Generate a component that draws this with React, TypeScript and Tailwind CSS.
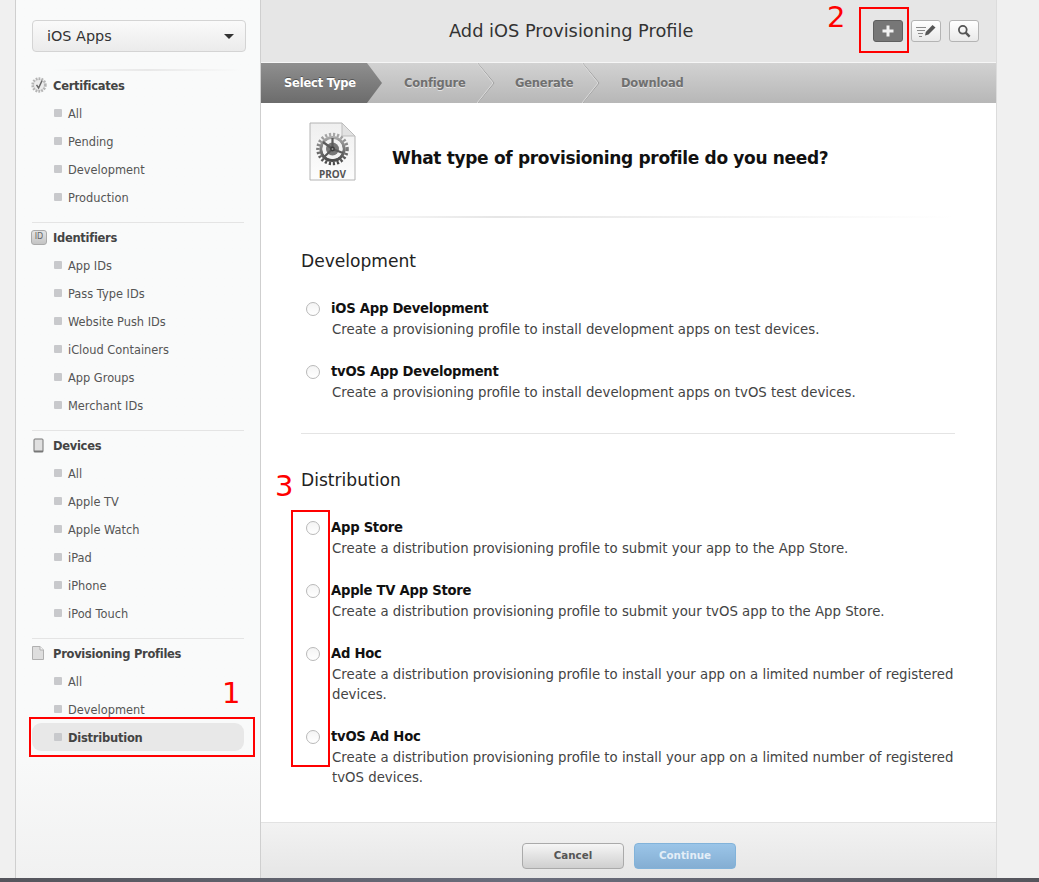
import React from 'react';

const SECTIONS = [
  { title: 'Certificates', icon: 'cert', items: ['All', 'Pending', 'Development', 'Production'] },
  { title: 'Identifiers', icon: 'id', items: ['App IDs', 'Pass Type IDs', 'Website Push IDs', 'iCloud Containers', 'App Groups', 'Merchant IDs'] },
  { title: 'Devices', icon: 'device', items: ['All', 'Apple TV', 'Apple Watch', 'iPad', 'iPhone', 'iPod Touch'] },
  { title: 'Provisioning Profiles', icon: 'doc', items: ['All', 'Development', 'Distribution'] },
];

const DEV_OPTIONS = [
  { title: 'iOS App Development', desc: 'Create a provisioning profile to install development apps on test devices.' },
  { title: 'tvOS App Development', desc: 'Create a provisioning profile to install development apps on tvOS test devices.' },
];

const DIST_OPTIONS = [
  { title: 'App Store', desc: 'Create a distribution provisioning profile to submit your app to the App Store.' },
  { title: 'Apple TV App Store', desc: 'Create a distribution provisioning profile to submit your tvOS app to the App Store.' },
  { title: 'Ad Hoc', desc: 'Create a distribution provisioning profile to install your app on a limited number of registered devices.' },
  { title: 'tvOS Ad Hoc', desc: 'Create a distribution provisioning profile to install your app on a limited number of registered tvOS devices.' },
];

function SectionIcon({ type }: { type: string }) {
  if (type === 'cert') {
    return (
      <svg width="16" height="16" viewBox="0 0 16 16" className="ml-[-1px]">
        <circle cx="8" cy="8" r="6.4" fill="#dcdcdc" stroke="#b4b4b4" strokeWidth="2.6" strokeDasharray="1.7 1.2" />
        <circle cx="8" cy="8" r="4.8" fill="#ececec" />
        <path d="M5.5 7.8 L7.6 11 L11 3.6" fill="none" stroke="#666" strokeWidth="1.4" />
      </svg>
    );
  }
  if (type === 'id') {
    return (
      <div className="w-[16px] h-[15px] ml-[-1px] rounded-[3px] border border-[#aaa] bg-gradient-to-b from-[#e4e4e4] to-[#c4c4c4] flex items-center justify-center text-[8px] leading-none text-[#666]">
        ID
      </div>
    );
  }
  if (type === 'device') {
    return (
      <svg width="11" height="15" viewBox="0 0 11 15" className="ml-[1px]">
        <rect x="0.5" y="0.5" width="10" height="14" rx="1.5" fill="#777" />
        <rect x="1.5" y="1.5" width="8" height="11" fill="#e0e0e0" />
      </svg>
    );
  }
  return (
    <svg width="12" height="14" viewBox="0 0 12 14">
      <path d="M0.5 0.5 H8 L11.5 4 V13.5 H0.5 Z" fill="#dedede" stroke="#b0b0b0" />
      <path d="M8 0.5 V4 H11.5" fill="#f6f6f6" stroke="#b0b0b0" />
    </svg>
  );
}

function Sidebar() {
  return (
    <aside className="w-[246px] shrink-0 border-x border-[#cfcfcf] bg-gradient-to-b from-[#f9fafa] from-85% to-[#f1f1f1] px-4 pt-5">
      <div className="h-8 w-[214px] rounded-[4px] border border-[#d4d4d4] bg-gradient-to-b from-[#fafafa] to-[#ebebeb] pl-[14px] pr-[11px] flex items-center justify-between">
        <span className="text-[14.4px] text-[#333] pt-[2px]">iOS Apps</span>
        <span className="w-0 h-0 border-x-[5px] border-x-transparent border-t-[5px] border-t-[#333]" />
      </div>
      <div className="mt-[17px] ml-5 h-[2px] w-[190px] bg-gradient-to-r from-transparent via-[#e8e8e8] to-transparent" />
      {SECTIONS.map((section, i) => (
        <section key={section.title} className={i === 0 ? '' : 'mt-[11px] border-t border-[#e4e4e4]'}>
          <div className="h-7 flex items-center">
            <div className="w-[21px] flex items-center">
              <SectionIcon type={section.icon} />
            </div>
            <span className="text-[11.5px] tracking-[-0.29px] font-bold text-[#444] pt-[3px]">{section.title}</span>
          </div>
          {section.items.map((item) => {
            const active = section.title === 'Provisioning Profiles' && item === 'Distribution';
            return (
              <div
                key={item}
                className={`h-7 w-[212px] pl-[22px] rounded-[9px] flex items-center gap-[6px] ${
                  active ? 'bg-[#e8e8e8] text-[11.5px] tracking-[-0.24px] font-bold text-[#444]' : 'text-[11.4px] text-[#555]'
                }`}
              >
                <span className="w-2 h-2 rounded-[1px] bg-[#c8c9cc]" />
                <span className="pt-[3px]">{item}</span>
              </div>
            );
          })}
        </section>
      ))}
    </aside>
  );
}

function Chevron() {
  return (
    <svg width="18" height="40" viewBox="0 0 18 40" className="absolute right-0 top-0">
      <path d="M0.5 0 L17 20 L0.5 40" fill="none" stroke="#9c9c9c" />
      <path d="M0 0 L16 20 L0 40" fill="none" stroke="#dcdcdc" />
    </svg>
  );
}

function StepBar() {
  return (
    <div className="h-[40px] flex bg-gradient-to-b from-[#d2d2d2] to-[#b7b7b7] text-[11.5px] tracking-[-0.2px] font-bold text-[#707070] [text-shadow:0_1px_0_#e4e4e4]">
      <div className="w-[121px] pl-[23px] pt-[2px] flex items-center bg-gradient-to-b from-[#8f8f8f] to-[#6c6c6c] text-white [text-shadow:0_-1px_0_#555] [clip-path:polygon(0_0,106px_0,121px_50%,106px_100%,0_100%)]">
        Select Type
      </div>
      <div className="relative w-[113px] pl-[22px] pt-[2px] flex items-center">
        Configure
        <Chevron />
      </div>
      <div className="relative w-[105px] pl-[20px] pt-[2px] flex items-center">
        Generate
        <Chevron />
      </div>
      <div className="pl-[21px] pt-[2px] flex items-center">Download</div>
    </div>
  );
}

function ProvIcon() {
  return (
    <svg width="48" height="60" viewBox="0 0 48 60" className="shrink-0">
      <defs>
        <linearGradient id="paper" x1="0" y1="0" x2="0" y2="1">
          <stop offset="0" stopColor="#efefef" />
          <stop offset="1" stopColor="#fdfdfd" />
        </linearGradient>
        <linearGradient id="gear" x1="0" y1="0" x2="0" y2="1">
          <stop offset="0" stopColor="#a8a8a8" />
          <stop offset="1" stopColor="#4a4a4a" />
        </linearGradient>
      </defs>
      <path d="M1 1 H33 L46 14 V58 H1 Z" fill="url(#paper)" stroke="#b4b4b4" />
      <path d="M33 1 V14 H46 Z" fill="#e2e2e2" stroke="#bdbdbd" />
      <circle cx="23.5" cy="27" r="14.6" fill="none" stroke="url(#gear)" strokeWidth="3.4" strokeDasharray="2.2 1.85" />
      <circle cx="23.5" cy="27" r="11.6" fill="none" stroke="url(#gear)" strokeWidth="3" />
      <circle cx="23.5" cy="27" r="10" fill="#f2f2f2" />
      <circle cx="23.5" cy="27" r="6.5" fill="#777" />
      <path d="M23.5 27 L23.5 16 M23.5 27 L34 31 M23.5 27 L14 36 M23.5 27 L14 20" stroke="#5a5a5a" strokeWidth="2.2" />
      <circle cx="23.5" cy="27" r="2.4" fill="#3c3c3c" />
      <circle cx="23.5" cy="27" r="0.9" fill="#9a9a9a" />
      <text x="23.5" y="55.5" textAnchor="middle" fontSize="10" fontWeight="700" fill="#555" fontFamily="'Noto Sans', sans-serif">
        PROV
      </text>
    </svg>
  );
}

function Option({ title, desc, className, radioClass }: { title: string; desc: string; className?: string; radioClass: string }) {
  return (
    <div className={`flex pl-[5px] ${className ?? ''}`}>
      <span className={`w-[14px] h-[14px] rounded-full border border-[#b9b9b9] bg-gradient-to-b from-[#f4f4f4] to-white shrink-0 ${radioClass}`} />
      <div className="ml-[11px] w-[630px]">
        <div className="text-[13.2px] tracking-[-0.26px] leading-[21px] font-bold text-[#111]">{title}</div>
        <div className="pl-px pt-px mb-[-1px] text-[13.3px] leading-[20px] text-[#444]">{desc}</div>
      </div>
    </div>
  );
}

function MiniButton({ children, dark }: { children: React.ReactNode; dark?: boolean }) {
  return (
    <button
      className={`w-[30px] h-[22px] rounded-[3px] border flex items-center justify-center ${
        dark ? 'bg-[#777] border-[#5f5f5f]' : 'bg-gradient-to-b from-white to-[#e9e9e9] border-[#b4b4b4]'
      }`}
    >
      {children}
    </button>
  );
}

function Main() {
  return (
    <main className="w-[735px] shrink-0 flex flex-col bg-white">
      <header className="relative h-[63px] bg-[#e6e6e6] border-b border-b-[#f6f6f6] pl-[188px] flex items-center">
        <h1 className="text-[17.8px] font-normal text-[#333]">Add iOS Provisioning Profile</h1>
        <div className="absolute left-[612px] top-5 flex gap-2">
          <MiniButton dark>
            <svg width="14" height="14" viewBox="0 0 14 14">
              <path d="M7 1.5 V12.5 M1.5 7 H12.5" stroke="#f2f2f2" strokeWidth="3" />
            </svg>
          </MiniButton>
          <MiniButton>
            <svg width="22" height="14" viewBox="0 0 22 14">
              <path d="M1 3.5 H11 M2 6.5 H10 M3 9.5 H8 M4 12.5 H7" stroke="#8a8a8a" strokeWidth="1" />
              <path d="M10 11.5 L10.8 8 L17.5 1 L20.5 3.6 L13.5 10.5 Z" fill="#555" />
            </svg>
          </MiniButton>
          <MiniButton>
            <svg width="14" height="14" viewBox="0 0 14 14">
              <circle cx="5.8" cy="5.8" r="3.9" fill="none" stroke="#555" strokeWidth="1.8" />
              <path d="M8.7 8.7 L12.6 12.6" stroke="#555" strokeWidth="2.4" />
            </svg>
          </MiniButton>
        </div>
      </header>
      <StepBar />
      <div className="flex-1 pl-[40px] pr-[41px]">
        <div className="pt-[19px] pl-[8px] flex items-start">
          <ProvIcon />
          <h2 className="ml-[35px] mt-[23px] text-[17px] tracking-[-0.33px] leading-[26px] font-bold text-[#111]">
            What type of provisioning profile do you need?
          </h2>
        </div>
        <div className="mt-[34px] h-[2px] bg-gradient-to-r from-transparent from-2% via-[#e6e6e6] via-30% to-transparent" />
        <h3 className="mt-[30px] text-[17.1px] leading-[26px] font-normal text-[#222]">Development</h3>
        <Option className="mt-[24px]" radioClass="mt-[4px]" {...DEV_OPTIONS[0]} />
        <Option className="mt-[22px]" radioClass="mt-[4px]" {...DEV_OPTIONS[1]} />
        <div className="mt-[31px] h-px bg-[#e4e4e4]" />
        <h3 className="mt-[33px] text-[17.1px] leading-[26px] font-normal text-[#222]">Distribution</h3>
        <Option className="mt-[24px]" radioClass="mt-[4px]" {...DIST_OPTIONS[0]} />
        <Option className="mt-[22px]" radioClass="mt-[4px]" {...DIST_OPTIONS[1]} />
        <Option className="mt-[22px]" radioClass="mt-[4px]" {...DIST_OPTIONS[2]} />
        <Option className="mt-[22px]" radioClass="mt-[4px]" {...DIST_OPTIONS[3]} />
      </div>
      <footer className="h-[56px] border-t border-[#e2e2e2] bg-gradient-to-b from-[#f2f2f2] to-[#e6e6e6] pt-5 pl-[261px] flex items-start gap-[10px] text-[10.3px] font-bold">
        <button className="w-[102px] h-[26px] rounded-[4px] border border-[#aaa] bg-gradient-to-b from-[#f6f6f6] to-[#cfcfcf] text-[#555]">
          Cancel
        </button>
        <button className="w-[102px] h-[26px] rounded-[4px] border border-[#82b3da] bg-gradient-to-b from-[#9bc5e8] to-[#84aed3] text-[#e4eef7]">
          Continue
        </button>
      </footer>
    </main>
  );
}

export default function App() {
  return (
    <div className="relative w-[1039px] h-[882px] overflow-hidden flex flex-col bg-[#f0f0f0] font-['DejaVu_Sans','Noto_Sans',sans-serif]">
      <div className="flex-1 min-h-0 flex pl-[15px]">
        <Sidebar />
        <Main />
        <div className="flex-1 border-l border-[#dcdcdc]" />
      </div>
      <div className="h-[4px] bg-gradient-to-r from-[#55555c] via-[#6a6d7c] to-[#55555c]" />

      {/* red annotations drawn over the screenshot */}
      <div className="absolute left-[29px] top-[717px] w-[226px] h-[40px] border-2 border-[#f00]" />
      <div className="absolute left-[859px] top-[7px] w-[50px] h-[46px] border-2 border-[#f00]" />
      <div className="absolute left-[291px] top-[510px] w-[39px] h-[257px] border-2 border-[#f00]" />
      <span className="absolute left-[222px] top-[676px] text-[29px] leading-[34px] text-[#f00]">1</span>
      <span className="absolute left-[827px] top-0 text-[29px] leading-[34px] text-[#f00]">2</span>
      <span className="absolute left-[275px] top-[469px] text-[29px] leading-[34px] text-[#f00]">3</span>
    </div>
  );
}
